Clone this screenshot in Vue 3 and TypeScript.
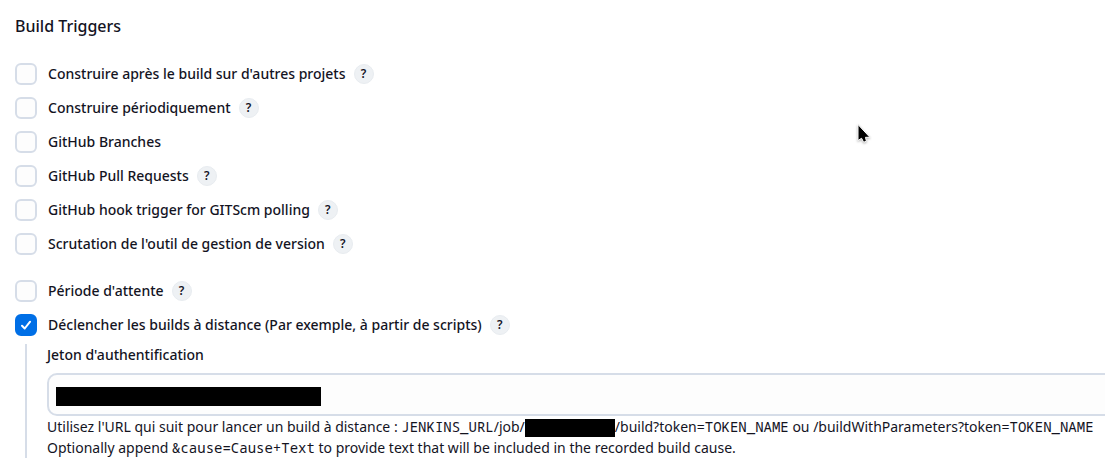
<script setup lang="ts">
import { ref } from 'vue'

interface Trigger {
  id: string
  label: string
  help: boolean
  checked: boolean
}

const groups = ref<Trigger[][]>([
  [
    { id: 'after-projects', label: "Construire après le build sur d'autres projets", help: true, checked: false },
    { id: 'periodic', label: 'Construire périodiquement', help: true, checked: false },
    { id: 'gh-branches', label: 'GitHub Branches', help: false, checked: false },
    { id: 'gh-pulls', label: 'GitHub Pull Requests', help: true, checked: false },
    { id: 'gh-hook', label: 'GitHub hook trigger for GITScm polling', help: true, checked: false },
    { id: 'scm', label: "Scrutation de l'outil de gestion de version", help: true, checked: false },
  ],
  [
    { id: 'quiet', label: "Période d'attente", help: true, checked: false },
    { id: 'remote', label: 'Déclencher les builds à distance (Par exemple, à partir de scripts)', help: true, checked: true },
  ],
])

const token = ref('')
</script>

<template>
  <main class="page">
    <h2 class="title">Build Triggers</h2>

    <div v-for="(group, g) in groups" :key="g" class="group">
      <div v-for="item in group" :key="item.id" class="row">
        <label class="option" :for="item.id">
          <span class="tick">
            <input :id="item.id" v-model="item.checked" type="checkbox" class="box" />
            <svg v-if="item.checked" class="mark" viewBox="0 0 22 22" aria-hidden="true">
              <path d="M7 11.8l2.7 2.7 5.4-6.8" />
            </svg>
          </span>
          <span>{{ item.label }}</span>
        </label>
        <button v-if="item.help" type="button" class="help" :aria-label="'Aide : ' + item.label">?</button>
      </div>
    </div>

    <section class="nested">
      <label class="field-label" for="token">Jeton d'authentification</label>
      <div class="field">
        <input id="token" v-model="token" type="text" class="text" />
        <span class="mask"></span>
      </div>
      <p class="hint">
        Utilisez l'URL qui suit pour lancer un build à distance : <code>JENKINS_URL</code>/job/<span class="redacted"></span>/build?token=<code>TOKEN_NAME</code> ou /buildWithParameters?token=<code>TOKEN_NAME</code><br />
        Optionally append <code>&amp;cause=Cause+Text</code> to provide text that will be included in the recorded build cause.
      </p>
    </section>

    <svg class="pointer" viewBox="0 0 14 20" aria-hidden="true">
      <path d="M1 .5v16l3.6-2.2 2 3.9 2.8-.9-.9-4h4.4z" />
    </svg>
  </main>
</template>

<style>
body {
  background: #fff;
}
</style>

<style scoped>
.page {
  position: relative;
  overflow: hidden;
  padding: 15px 0 12px 15px;
  color: #14141f;
  font-family: "Noto Sans", sans-serif;
  font-size: 14px;
  line-height: 22px;
}

.title {
  margin: 0 0 26px;
  font-size: 16px;
  font-weight: 500;
  line-height: 22px;
}

.group {
  display: flex;
  flex-direction: column;
  gap: 12px;
  margin-bottom: 25px;
}

.row {
  display: flex;
  align-items: center;
  gap: 8px;
}

.option {
  display: flex;
  align-items: center;
  gap: 11px;
  font-weight: 500;
}

.tick {
  position: relative;
  display: flex;
}

.box {
  appearance: none;
  box-sizing: border-box;
  width: 22px;
  height: 22px;
  margin: 0;
  border: 2px solid #d6dde8;
  border-radius: 6px;
  background: #fdfdfd;
}

.box:checked {
  border-color: #006fe6;
  background: #006fe6;
}

.mark {
  position: absolute;
  inset: 0;
  fill: none;
  stroke: #fff;
  stroke-width: 2;
  stroke-linecap: round;
  stroke-linejoin: round;
  pointer-events: none;
}

.help {
  width: 20px;
  height: 20px;
  padding: 0;
  border: 1px solid #e8ecf0;
  border-radius: 50%;
  background: #eef1f4;
  color: #14141f;
  font-family: inherit;
  font-size: 12px;
  font-weight: 600;
  line-height: 18px;
}

.nested {
  margin: -17px 0 0 10px;
  padding-left: 20px;
  border-left: 2px solid #d6dde8;
}

.field-label {
  display: block;
  margin-bottom: 8px;
  font-weight: 500;
  line-height: 21px;
}

.field {
  position: relative;
  margin-right: -12px;
}

.text {
  display: block;
  box-sizing: border-box;
  width: 100%;
  height: 43px;
  padding: 8px;
  border: 2px solid #d6dde8;
  border-radius: 10px;
  background: #fdfdfd;
  font: inherit;
}

.mask {
  position: absolute;
  top: 14px;
  left: 9px;
  width: 265px;
  height: 19px;
  background: #000;
  pointer-events: none;
}

.hint {
  margin: 0;
  line-height: 21px;
  white-space: nowrap;
}

.hint code {
  font-family: "Noto Sans Mono", "DejaVu Sans Mono", monospace;
  font-size: 14px;
  line-height: 14px;
}

.redacted {
  display: inline-block;
  width: 90px;
  height: 18px;
  background: #000;
  vertical-align: middle;
}

.pointer {
  position: absolute;
  top: 124px;
  left: 857px;
  width: 14px;
  height: 20px;
  fill: #000;
  stroke: #fff;
  stroke-width: 1;
  filter: drop-shadow(0 1px 1px rgb(0 0 0 / 30%));
}
</style>
